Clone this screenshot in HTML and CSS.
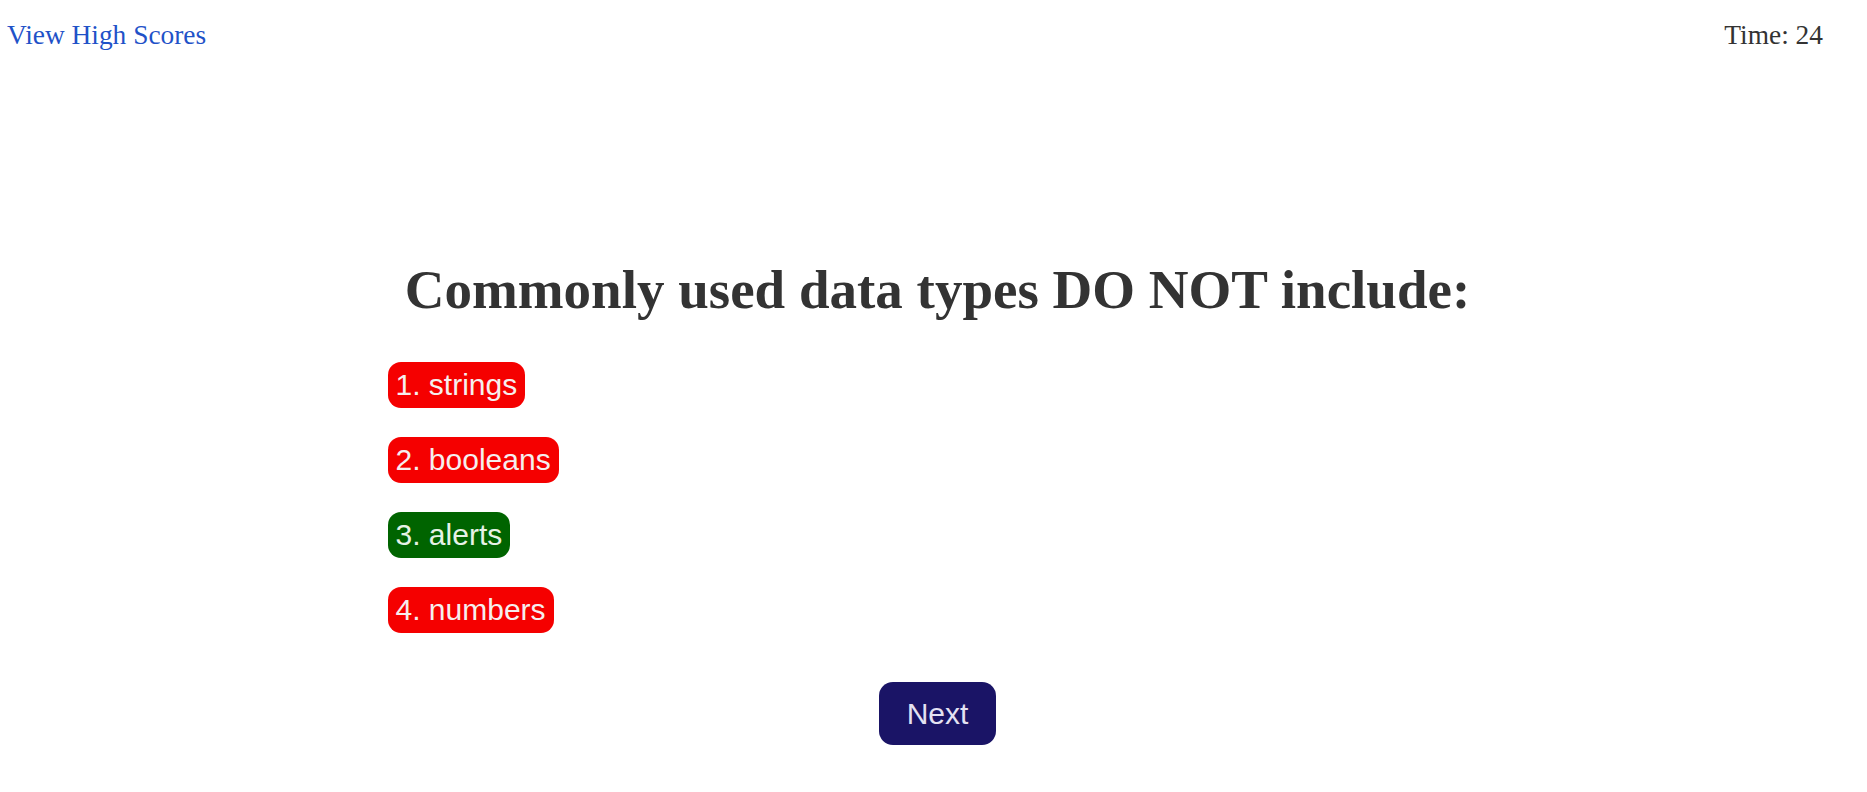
FILE: index.html
```html
<!DOCTYPE html>
<html>
<head>
<meta charset="utf-8">
<link rel="stylesheet" href="styles.css">
</head>
<body>
<header class="topbar">
  <a class="scores-link" href="#">View High Scores</a>
  <span class="timer">Time: 24</span>
</header>
<main class="quiz">
  <h1 class="question">Commonly used data types DO NOT include:</h1>
  <div class="answers">
    <button class="answer wrong">1. strings</button>
    <button class="answer wrong">2. booleans</button>
    <button class="answer right">3. alerts</button>
    <button class="answer wrong">4. numbers</button>
  </div>
  <div class="actions">
    <button class="next-btn">Next</button>
  </div>
</main>
</body>
</html>
```

FILE: styles.css
```css
html, body {
  margin: 0;
  padding: 0;
  background: #ffffff;
}

body {
  font-family: "Liberation Serif", "Times New Roman", serif;
  color: #333333;
}

.topbar {
  display: flex;
  justify-content: space-between;
  align-items: flex-start;
  padding: 20px 44px 0 7px;
  font-size: 27.4px;
  line-height: 31px;
}

.scores-link {
  color: #1f52c8;
  text-decoration: none;
}

.timer {
  color: #333333;
}

.quiz {
  max-width: 1100px;
  margin: 0 auto;
  padding-left: 8px;
  padding-top: 207px;
  box-sizing: content-box;
}

.question {
  margin: 0;
  text-align: center;
  font-size: 55px;
  line-height: 63px;
  font-weight: bold;
  color: #333333;
}

.answers {
  display: flex;
  flex-direction: column;
  align-items: flex-start;
  gap: 29px;
  margin-top: 41px;
}

.answer {
  font-family: "Liberation Sans", Arial, sans-serif;
  font-size: 30px;
  line-height: 34px;
  padding: 6px 8px;
  border: none;
  border-radius: 13px;
  color: #f6eeee;
  cursor: pointer;
}

.answer.wrong {
  background: #f50000;
}

.answer.right {
  background: #006400;
  color: #e6f2e6;
}

.actions {
  display: flex;
  justify-content: center;
  margin-top: 49px;
}

.next-btn {
  font-family: "Liberation Sans", Arial, sans-serif;
  font-size: 30px;
  line-height: 35px;
  padding: 14px 28px;
  border: none;
  border-radius: 14px;
  background: #1a1466;
  color: #e4e2f2;
  cursor: pointer;
}
```
